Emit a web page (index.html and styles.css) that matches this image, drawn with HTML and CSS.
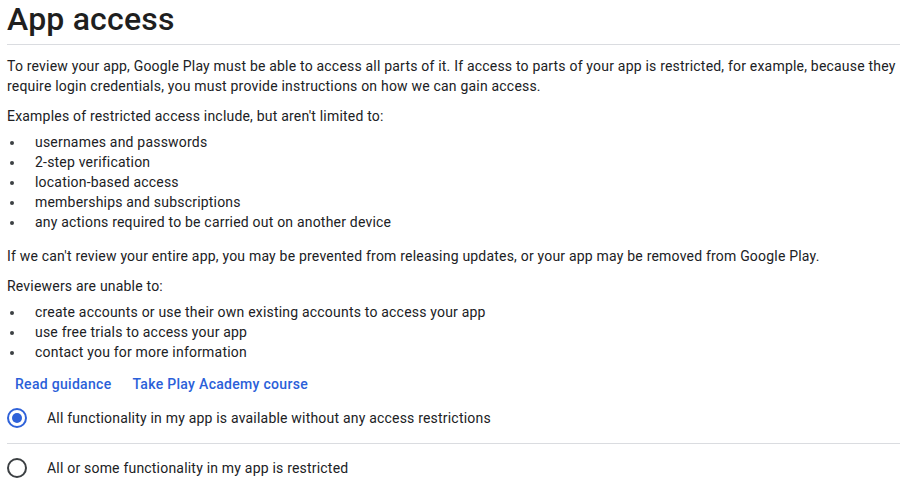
FILE: index.html
```html
<!DOCTYPE html>
<html>
<head>
<meta charset="utf-8">
<link rel="stylesheet" href="styles.css">
</head>
<body>
<div class="page">
  <h1 class="title">App access</h1>
  <div class="content">
    <p class="para">To review your app, Google Play must be able to access all parts of it. If access to parts of your app is restricted, for example, because they require login credentials, you must provide instructions on how we can gain access.</p>
    <p class="para lead">Examples of restricted access include, but aren't limited to:</p>
    <ul class="list">
      <li>usernames and passwords</li>
      <li>2-step verification</li>
      <li>location-based access</li>
      <li>memberships and subscriptions</li>
      <li>any actions required to be carried out on another device</li>
    </ul>
    <p class="para">If we can't review your entire app, you may be prevented from releasing updates, or your app may be removed from Google Play.</p>
    <p class="para lead">Reviewers are unable to:</p>
    <ul class="list last">
      <li>create accounts or use their own existing accounts to access your app</li>
      <li>use free trials to access your app</li>
      <li>contact you for more information</li>
    </ul>
    <div class="links">
      <a class="link" href="#">Read guidance</a>
      <a class="link" href="#">Take Play Academy course</a>
    </div>
    <div class="options">
      <label class="option">
        <span class="radio checked"></span>
        <span class="option-text">All functionality in my app is available without any access restrictions</span>
      </label>
      <label class="option">
        <span class="radio"></span>
        <span class="option-text">All or some functionality in my app is restricted</span>
      </label>
    </div>
  </div>
</div>
</body>
</html>
```
FILE: styles.css
```css
html, body {
  margin: 0;
  padding: 0;
  background: #ffffff;
}
body {
  font-family: Roboto, "Liberation Sans", Arial, sans-serif;
  color: #202124;
}
.page {
  padding: 0 1px 0 7px;
}
.title {
  margin: 0;
  font-family: Roboto, "Liberation Sans", sans-serif;
  font-weight: 500;
  font-size: 32px;
  line-height: 38px;
  padding-bottom: 6px;
  border-bottom: 1px solid #dadce0;
  color: #1f1f1f;
  letter-spacing: 0.2px;
}
.content {
  padding-top: 11px;
  font-size: 14px;
  line-height: 20px;
  letter-spacing: 0.2px;
}
.para {
  margin: 0 0 10px 0;
}
.para.lead {
  margin-bottom: 6px;
}
.list {
  list-style: none;
  margin: 0 0 14px 0;
  padding: 0 0 0 28px;
}
.list.last {
  margin-bottom: 13px;
}
.list li {
  position: relative;
}
.list li::before {
  content: "";
  position: absolute;
  left: -25px;
  top: 9px;
  width: 4px;
  height: 4px;
  border-radius: 50%;
  background: #3c4043;
}
.links {
  display: flex;
  gap: 21px;
  padding: 0 0 0 8px;
  margin-bottom: 13px;
}
.link {
  color: #2b5fd9;
  text-decoration: none;
  font-size: 14px;
  font-weight: 500;
  letter-spacing: 0.3px;
  line-height: 18px;
}
.options {
  display: flex;
  flex-direction: column;
}
.option {
  display: flex;
  align-items: center;
  gap: 20px;
  height: 24px;
}
.option + .option {
  border-top: 1px solid #dadce0;
  margin-top: 13px;
  padding-top: 12px;
}
.radio {
  width: 16px;
  height: 16px;
  border: 2px solid #3c4043;
  border-radius: 50%;
  box-sizing: content-box;
  display: flex;
  align-items: center;
  justify-content: center;
}
.radio.checked {
  border-color: #2f62d9;
}
.radio.checked::after {
  content: "";
  width: 10px;
  height: 10px;
  border-radius: 50%;
  background: #2f62d9;
}
.option-text {
  font-size: 14px;
}
```
